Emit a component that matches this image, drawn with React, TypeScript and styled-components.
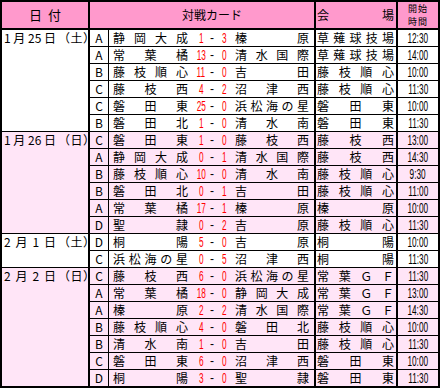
import styled, { createGlobalStyle } from "styled-components";

type Match = [string, string, number, number, string, string, string];

interface Day {
  date: string;
  dow: string;
  pink: boolean;
  matches: Match[];
}

const days: Day[] = [
  {
    date: "1月25日",
    dow: "土",
    pink: false,
    matches: [
      ["A", "静岡大成", 1, 3, "榛原", "草薙球技場", "12:30"],
      ["A", "常葉橘", 13, 0, "清水国際", "草薙球技場", "14:00"],
      ["B", "藤枝順心", 11, 0, "吉田", "藤枝順心", "10:00"],
      ["C", "藤枝西", 4, 2, "沼津西", "藤枝順心", "11:30"],
      ["C", "磐田東", 25, 0, "浜松海の星", "磐田東", "10:00"],
      ["B", "磐田北", 1, 0, "清水南", "磐田東", "11:30"],
    ],
  },
  {
    date: "1月26日",
    dow: "日",
    pink: true,
    matches: [
      ["C", "磐田東", 1, 0, "藤枝西", "藤枝西", "13:00"],
      ["A", "静岡大成", 0, 1, "清水国際", "藤枝西", "14:30"],
      ["B", "藤枝順心", 10, 0, "清水南", "藤枝順心", "9:30"],
      ["B", "磐田北", 0, 1, "吉田", "藤枝順心", "11:00"],
      ["A", "常葉橘", 17, 1, "榛原", "榛原", "10:00"],
      ["D", "聖隷", 0, 2, "吉原", "藤枝順心", "11:30"],
    ],
  },
  {
    date: "2月1日",
    dow: "土",
    pink: false,
    matches: [
      ["D", "桐陽", 5, 0, "吉原", "桐陽", "10:00"],
      ["C", "浜松海の星", 0, 5, "沼津西", "桐陽", "11:30"],
    ],
  },
  {
    date: "2月2日",
    dow: "日",
    pink: true,
    matches: [
      ["C", "藤枝西", 6, 0, "浜松海の星", "常葉ＧＦ", "11:30"],
      ["A", "常葉橘", 18, 0, "静岡大成", "常葉ＧＦ", "13:00"],
      ["A", "榛原", 2, 2, "清水国際", "常葉ＧＦ", "14:30"],
      ["B", "藤枝順心", 4, 0, "磐田北", "藤枝順心", "10:00"],
      ["B", "清水南", 1, 0, "吉田", "藤枝順心", "11:30"],
      ["C", "磐田東", 6, 0, "沼津西", "磐田東", "10:00"],
      ["D", "桐陽", 3, 0, "聖隷", "磐田東", "11:30"],
    ],
  },
];

const GlobalStyle = createGlobalStyle`
  html, body {
    margin: 0;
    padding: 0;
    background: #fff;
  }
  body {
    font-family: "Noto Sans CJK JP", "Noto Sans", sans-serif;
    font-size: 12px;
    color: #000;
  }
  * {
    box-sizing: border-box;
  }
`;

const Table = styled.div`
  width: 440px;
  border: 2px solid #000;
`;

const HeaderRow = styled.div`
  display: flex;
  height: 28px;
  background: #ff99cc;
  border-bottom: 2px solid #000;
`;

const HeadCell = styled.div<{ $w: number; $line?: number }>`
  width: ${(p) => p.$w}px;
  flex: ${(p) => (p.$line === 0 ? 1 : "none")};
  display: flex;
  align-items: center;
  justify-content: center;
  border-right: ${(p) => p.$line ?? 2}px solid #000;
  line-height: 16px;
`;

const HeadTitle = styled.span`
  padding-left: 20px;
`;

const HeadPair = styled.div`
  display: flex;
  gap: 6px;
  font-size: 13px;
`;

const HeadVenue = styled.div`
  width: 100%;
  padding: 0 2px 0 1px;
`;

const TimeHead = styled.div`
  display: flex;
  flex-direction: column;
  align-items: center;
  font-size: 9px;
  line-height: 13px;
  letter-spacing: 1px;
`;

const Block = styled.div<{ $pink: boolean }>`
  display: flex;
  background: ${(p) => (p.$pink ? "#ffe5f7" : "#fff")};
  border-bottom: 1px solid #000;

  &:last-child {
    border-bottom: none;
  }
`;

const DateCell = styled.div`
  width: 88px;
  flex: none;
  border-right: 2px solid #000;
  padding: 0 0 0 2px;
  display: flex;
  align-items: flex-start;
  line-height: 16px;
`;

const Weekday = styled.span`
  margin-left: 2px;
  letter-spacing: 0.5px;
  white-space: nowrap;
`;

const Rows = styled.div`
  flex: 1;
  display: flex;
  flex-direction: column;
`;

const Row = styled.div`
  display: flex;
  height: 17px;
  border-bottom: 1px solid #000;
  line-height: 16px;

  &:last-child {
    height: 16px;
    border-bottom: none;
  }
`;

const GroupCell = styled.div`
  width: 19px;
  flex: none;
  border-right: 1px solid #000;
  text-align: center;
`;

const MatchCell = styled.div`
  width: 207px;
  flex: none;
  border-right: 2px solid #000;
  display: flex;
  padding-left: 4px;
`;

const VenueCell = styled.div`
  width: 82px;
  flex: none;
  border-right: 2px solid #000;
  padding: 0 2px 0 1px;
`;

const TimeCell = styled.div`
  flex: 1;
  text-align: center;
`;

const Spread = styled.div<{ $w?: number }>`
  display: flex;
  justify-content: space-between;
  width: ${(p) => (p.$w ? `${p.$w}px` : "100%")};
  flex: none;
  white-space: nowrap;
`;

const Score = styled.div<{ $side: "home" | "away" }>`
  width: ${(p) => (p.$side === "home" ? 18 : 20)}px;
  margin-left: ${(p) => (p.$side === "home" ? 4 : 0)}px;
  margin-right: ${(p) => (p.$side === "away" ? 1 : 0)}px;
  text-align: center;
  color: #ff0000;
`;

const Dash = styled.div`
  width: 4px;
  text-align: center;
  font-family: "Liberation Sans", sans-serif;
`;

const Narrow = styled.span`
  display: inline-block;
  font-family: "Liberation Sans", sans-serif;
  font-size: 15px;
  transform: scaleX(0.55);
  transform-origin: center;
`;

const tokens = (s: string) => s.match(/\d+|./gu) ?? [];

const Spaced = ({ text, w }: { text: string; w?: number }) => (
  <Spread $w={w}>
    {tokens(text).map((t, i) => (
      <span key={i}>{t}</span>
    ))}
  </Spread>
);

const App = () => {
  return (
    <>
      <GlobalStyle />
      <Table>
        <HeaderRow>
          <HeadCell $w={88}>
            <HeadPair>
              <span>日</span>
              <span>付</span>
            </HeadPair>
          </HeadCell>
          <HeadCell $w={226}>
            <HeadTitle>対戦カード</HeadTitle>
          </HeadCell>
          <HeadCell $w={82}>
            <HeadVenue>
              <Spaced text="会場" />
            </HeadVenue>
          </HeadCell>
          <HeadCell $w={40} $line={0}>
            <TimeHead>
              <span>開始</span>
              <span>時間</span>
            </TimeHead>
          </HeadCell>
        </HeaderRow>
        {days.map((day) => (
          <Block key={day.date} $pink={day.pink}>
            <DateCell>
              <Spaced text={day.date} w={52} />
              <Weekday>（{day.dow}）</Weekday>
            </DateCell>
            <Rows>
              {day.matches.map(([group, home, hs, as, away, venue, time], i) => (
                <Row key={i}>
                  <GroupCell>{group}</GroupCell>
                  <MatchCell>
                    <Spaced text={home} w={75} />
                    <Score $side="home">
                      <Narrow>{hs}</Narrow>
                    </Score>
                    <Dash>-</Dash>
                    <Score $side="away">
                      <Narrow>{as}</Narrow>
                    </Score>
                    <Spaced text={away} w={74} />
                  </MatchCell>
                  <VenueCell>
                    <Spaced text={venue} />
                  </VenueCell>
                  <TimeCell>
                    <Narrow>{time}</Narrow>
                  </TimeCell>
                </Row>
              ))}
            </Rows>
          </Block>
        ))}
      </Table>
    </>
  );
};

export default App;
